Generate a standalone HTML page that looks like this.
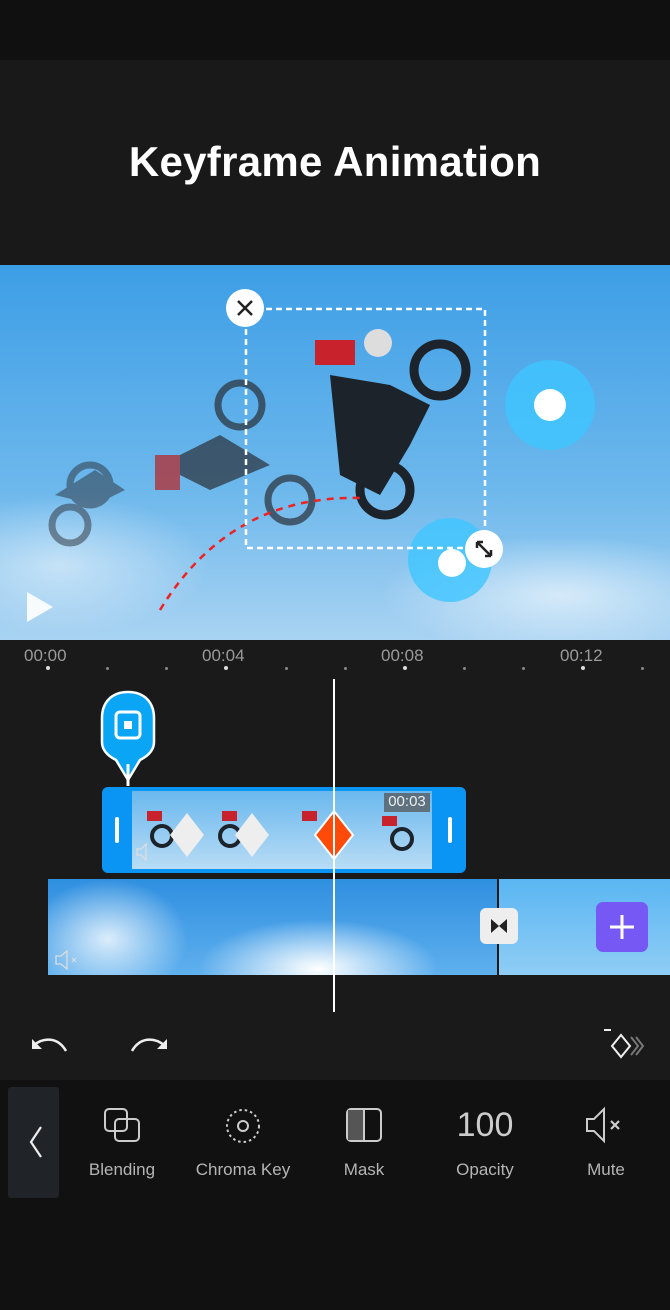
<!DOCTYPE html>
<html><head><meta charset="utf-8"><style>
*{margin:0;padding:0;box-sizing:border-box}
body{width:670px;height:1310px;background:#1a1a1a;font-family:"Liberation Sans",sans-serif;position:relative;overflow:hidden}
.a{position:absolute}
.sky{background:radial-gradient(ellipse 200px 90px at 110px 560px,rgba(255,255,255,.7),transparent),radial-gradient(ellipse 180px 60px at 560px 330px,rgba(255,255,255,.6),transparent),radial-gradient(ellipse 260px 80px at 330px 600px,rgba(230,240,255,.6),transparent),radial-gradient(ellipse 150px 70px at 60px 300px,rgba(255,255,255,.5),transparent),linear-gradient(180deg,#3d9ee6,#6db8ec 60%,#a9d3f2)}
.lbl{color:#b5b5b5;font-size:17px;text-align:center;width:120px}
.tk{color:#9a9a9a;font-size:17px}
.dot{width:3px;height:3px;border-radius:50%;background:#888;top:667px}
.dot.b{background:#ddd;width:4px;height:4px;top:666px}
</style></head><body>
<div class="a" style="left:0;top:0;width:670px;height:60px;background:#101010"></div>
<div class="a" style="left:0;top:60px;width:670px;height:205px;background:#191919"></div>
<div class="a" style="left:0;top:138px;width:670px;text-align:center;color:#fff;font-weight:bold;font-size:42px;letter-spacing:0.3px">Keyframe Animation</div>
<div class="a sky" style="left:0;top:265px;width:670px;height:375px"></div>
<svg class="a" style="left:0;top:265px" width="670" height="375">
<g fill="#2a2f38" opacity=".5"><circle cx="90" cy="220" r="20" fill="none" stroke="#2a2f38" stroke-width="7"/><path d="M55 230l40-25 30 20-30 15z"/><circle cx="70" cy="260" r="18" fill="none" stroke="#2a2f38" stroke-width="7"/></g>
<g fill="#2a2f38" opacity=".7"><circle cx="240" cy="140" r="22" fill="none" stroke="#2a2f38" stroke-width="7"/><path d="M160 200l60-30 50 30-60 25z"/><circle cx="290" cy="235" r="22" fill="none" stroke="#2a2f38" stroke-width="7"/><rect x="155" y="190" width="25" height="35" fill="#b22"/></g>
<g><circle cx="440" cy="105" r="26" fill="none" stroke="#1d232b" stroke-width="9"/><circle cx="385" cy="225" r="25" fill="none" stroke="#1d232b" stroke-width="9"/><path d="M330 110l60 10 40 20-20 40-30 50-40-20z" fill="#1d232b"/><rect x="315" y="75" width="40" height="25" fill="#c8232c"/><circle cx="378" cy="78" r="14" fill="#ddd"/></g>
<circle cx="550" cy="140" r="45" fill="#3fc6ff" opacity=".8"/><circle cx="550" cy="140" r="16" fill="#fff"/>
<circle cx="450" cy="295" r="42" fill="#3fc6ff" opacity=".8"/><circle cx="452" cy="298" r="14" fill="#fff"/>
<path d="M160 345 Q230 230 360 233" fill="none" stroke="#e22" stroke-width="2.5" stroke-dasharray="7 6"/>
<rect x="246" y="44" width="239" height="239" fill="none" stroke="#fff" stroke-width="2.5" stroke-dasharray="6 4"/>
<circle cx="245" cy="43" r="19" fill="#fff"/><path d="M238 36l14 14M252 36l-14 14" stroke="#222" stroke-width="2.5"/>
<circle cx="484" cy="284" r="19" fill="#fff"/><path d="M477 277l14 14M477 277v6M477 277h6M491 291v-6M491 291h-6" stroke="#222" stroke-width="2.5" fill="none"/>
<path d="M27 327v30l26-15z" fill="#fff" opacity=".9"/>
</svg>
<div class="a" style="left:0;top:640px;width:670px;height:440px;background:#1a1a1a"></div>
<div class="a tk" style="left:24px;top:646px">00:00</div>
<div class="a tk" style="left:202px;top:646px">00:04</div>
<div class="a tk" style="left:381px;top:646px">00:08</div>
<div class="a tk" style="left:560px;top:646px">00:12</div>
<div class="a dot b" style="left:46px"></div><div class="a dot" style="left:106px"></div><div class="a dot" style="left:165px"></div><div class="a dot b" style="left:224px"></div><div class="a dot" style="left:285px"></div><div class="a dot" style="left:344px"></div><div class="a dot b" style="left:403px"></div><div class="a dot" style="left:463px"></div><div class="a dot" style="left:522px"></div><div class="a dot b" style="left:581px"></div><div class="a dot" style="left:641px"></div>
<svg class="a" style="left:98px;top:690px" width="62" height="100"><path d="M30 2C14 2 4 12 4 28v24c0 8 6 14 14 18l12 20 12-20c8-4 14-10 14-18V28C56 12 46 2 30 2z" fill="#0aa6f5" stroke="#fff" stroke-width="2.5"/><rect x="18" y="22" width="24" height="26" rx="4" fill="none" stroke="#fff" stroke-width="3"/><rect x="26" y="31" width="8" height="8" fill="#fff"/><rect x="28.5" y="74" width="3" height="22" fill="#fff"/></svg>
<div class="a" style="left:102px;top:787px;width:364px;height:86px;background:#0a94f3;border-radius:6px"></div>
<div class="a sky" style="left:132px;top:791px;width:300px;height:78px;background:linear-gradient(180deg,#6ab8ee,#b8dcf5)"></div>
<div class="a" style="left:384px;top:793px;width:46px;height:19px;background:#555b;color:#eee;font-size:15px;text-align:center">00:03</div>
<div class="a" style="left:115px;top:817px;width:4px;height:26px;background:#fff;border-radius:2px"></div>
<div class="a" style="left:448px;top:817px;width:4px;height:26px;background:#fff;border-radius:2px"></div>
<svg class="a" style="left:132px;top:791px" width="300" height="78"><g fill="#1d232b"><circle cx="30" cy="45" r="10" fill="none" stroke="#1d232b" stroke-width="4"/><rect x="15" y="20" width="15" height="10" fill="#c8232c"/><circle cx="98" cy="45" r="10" fill="none" stroke="#1d232b" stroke-width="4"/><rect x="90" y="20" width="15" height="10" fill="#c8232c"/><rect x="170" y="20" width="15" height="10" fill="#c8232c"/><circle cx="270" cy="48" r="10" fill="none" stroke="#1d232b" stroke-width="4"/><rect x="250" y="25" width="15" height="10" fill="#c8232c"/></g>
<path d="M55 22l17 22-17 22-17-22z" fill="#eee"/><path d="M120 22l17 22-17 22-17-22z" fill="#eee"/><path d="M202 20l19 24-19 24-19-24z" fill="#ff4a0a" stroke="#fff" stroke-width="2"/>
<path d="M5 58h4l5-5v16l-5-5H5z" fill="none" stroke="#ddd" stroke-width="1.3"/></svg>
<div class="a sky" style="left:48px;top:879px;width:449px;height:96px;background:radial-gradient(ellipse 120px 50px at 270px 90px,#fff,transparent),radial-gradient(ellipse 80px 60px at 60px 60px,rgba(255,255,255,.8),transparent),linear-gradient(180deg,#2f8fe0,#5fb0ee)"></div>
<div class="a" style="left:499px;top:879px;width:171px;height:96px;background:linear-gradient(180deg,#5ab6f2,#8fcdf5)"></div>
<div class="a" style="left:480px;top:908px;width:38px;height:36px;background:#eee;border-radius:6px"></div>
<svg class="a" style="left:480px;top:908px" width="38" height="36"><path d="M11 11l8 7-8 7zM27 11l-8 7 8 7z" fill="#222"/></svg>
<div class="a" style="left:596px;top:902px;width:52px;height:50px;background:#7659f5;border-radius:7px"></div>
<svg class="a" style="left:596px;top:902px" width="52" height="50"><path d="M26 13v24M14 25h24" stroke="#fff" stroke-width="3"/></svg>
<svg class="a" style="left:54px;top:948px" width="30" height="24"><path d="M2 8h5l6-5v18l-6-5H2z" fill="none" stroke="#ddd" stroke-width="1.3"/><path d="M18 10l4 4M22 10l-4 4" stroke="#ddd"/></svg>
<div class="a" style="left:333px;top:679px;width:2px;height:333px;background:#fff"></div>
<svg class="a" style="left:28px;top:1033px" width="150" height="30"><path d="M6 12c10-8 24-8 32 6" fill="none" stroke="#eee" stroke-width="2.5"/><path d="M4 6v10h10z" fill="#eee"/><path d="M104 18c8-14 22-14 32-6" fill="none" stroke="#eee" stroke-width="2.5"/><path d="M139 6v10h-10z" fill="#eee"/></svg>
<svg class="a" style="left:600px;top:1025px" width="50" height="40"><path d="M4 5h7" stroke="#eee" stroke-width="2"/><path d="M21 10l9 11-9 11-9-11z" fill="none" stroke="#eee" stroke-width="2"/><path d="M31 12l7 9-7 9M36 12l7 9-7 9" fill="none" stroke="#777" stroke-width="2"/></svg>
<div class="a" style="left:0;top:1080px;width:670px;height:230px;background:#111"></div>
<div class="a" style="left:8px;top:1087px;width:51px;height:111px;background:#202327;border-radius:3px"></div>
<svg class="a" style="left:8px;top:1087px" width="51" height="111"><path d="M33 40L23 55l10 15" fill="none" stroke="#eee" stroke-width="2.2"/></svg>
<svg class="a" style="left:100px;top:1105px" width="46" height="42"><rect x="5" y="4" width="22" height="22" rx="4" fill="none" stroke="#ccc" stroke-width="2"/><rect x="15" y="14" width="24" height="22" rx="4" fill="none" stroke="#ccc" stroke-width="2"/></svg>
<svg class="a" style="left:220px;top:1105px" width="46" height="42"><circle cx="23" cy="21" r="16" fill="none" stroke="#ccc" stroke-width="2" stroke-dasharray="2.5 3"/><circle cx="23" cy="21" r="5" fill="none" stroke="#ccc" stroke-width="2"/></svg>
<svg class="a" style="left:342px;top:1105px" width="46" height="42"><rect x="5" y="4" width="34" height="32" rx="4" fill="none" stroke="#ccc" stroke-width="2"/><rect x="6" y="5" width="16" height="30" fill="#555"/><path d="M22 4v32" stroke="#ccc" stroke-width="2"/></svg>
<div class="a" style="left:425px;top:1106px;width:120px;text-align:center;color:#ccc;font-size:34px">100</div>
<svg class="a" style="left:583px;top:1105px" width="46" height="42"><path d="M4 14h7l10-10v32L11 26H4z" fill="none" stroke="#ccc" stroke-width="2"/><path d="M28 16l8 8M36 16l-8 8" stroke="#ccc" stroke-width="2.2"/></svg>
<div class="a lbl" style="left:62px;top:1160px">Blending</div>
<div class="a lbl" style="left:183px;top:1160px">Chroma Key</div>
<div class="a lbl" style="left:304px;top:1160px">Mask</div>
<div class="a lbl" style="left:425px;top:1160px">Opacity</div>
<div class="a lbl" style="left:546px;top:1160px">Mute</div>
</body></html>
